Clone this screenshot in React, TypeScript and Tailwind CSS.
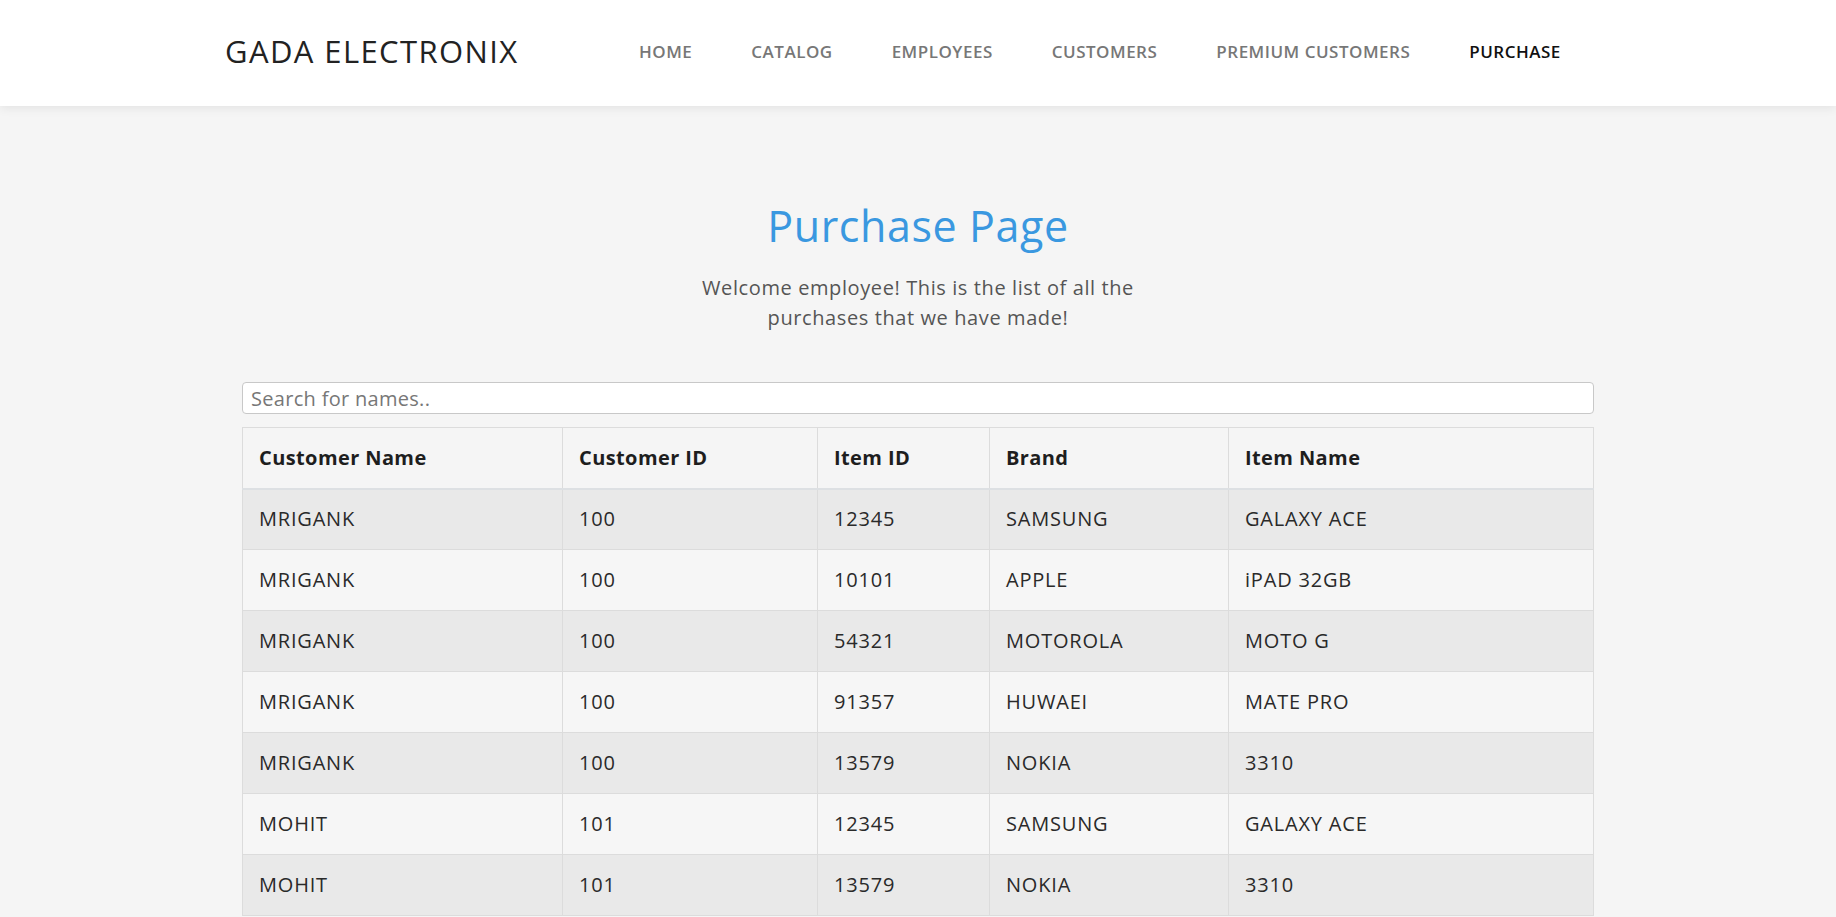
import React from 'react';

const navItems = ['HOME', 'CATALOG', 'EMPLOYEES', 'CUSTOMERS', 'PREMIUM CUSTOMERS', 'PURCHASE'];

const purchases = [
  { name: 'MRIGANK', customerId: '100', itemId: '12345', brand: 'SAMSUNG', item: 'GALAXY ACE' },
  { name: 'MRIGANK', customerId: '100', itemId: '10101', brand: 'APPLE', item: 'iPAD 32GB' },
  { name: 'MRIGANK', customerId: '100', itemId: '54321', brand: 'MOTOROLA', item: 'MOTO G' },
  { name: 'MRIGANK', customerId: '100', itemId: '91357', brand: 'HUWAEI', item: 'MATE PRO' },
  { name: 'MRIGANK', customerId: '100', itemId: '13579', brand: 'NOKIA', item: '3310' },
  { name: 'MOHIT', customerId: '101', itemId: '12345', brand: 'SAMSUNG', item: 'GALAXY ACE' },
  { name: 'MOHIT', customerId: '101', itemId: '13579', brand: 'NOKIA', item: '3310' },
];

const font = { fontFamily: '"Open Sans", "Liberation Sans", sans-serif' };

export default function App() {
  return (
    <div className="min-h-screen bg-[#f5f5f5] text-[#333]" style={font}>
      <header className="relative z-10 h-[106px] bg-white shadow-[0_2px_10px_rgba(0,0,0,0.08)]">
        <div className="flex h-full items-center pb-[3px] pl-[225px]">
          <div className="w-[414px] text-[31px] font-normal tracking-[1.4px] text-[#222]">GADA ELECTRONIX</div>
          <nav className="flex items-center gap-[59px]">
            {navItems.map((item) => (
              <a
                key={item}
                href="#"
                className={
                  item === 'PURCHASE'
                    ? 'text-[17px] font-semibold tracking-[0.5px] text-[#111]'
                    : 'text-[17px] font-semibold tracking-[0.5px] text-[#777]'
                }
              >
                {item}
              </a>
            ))}
          </nav>
        </div>
      </header>

      <main className="pt-[92px]">
        <div className="text-center">
          <h1 className="text-[43px] leading-[56px] font-normal tracking-[0.6px] text-[#3a98e0]">Purchase Page</h1>
          <p className="mt-[19px] text-[20px] leading-[30px] tracking-[0.6px] text-[#555]">
            Welcome employee! This is the list of all the
            <br />
            purchases that we have made!
          </p>
        </div>

        <div className="mx-auto mt-[49px] w-[1352px]">
          <input
            type="text"
            placeholder="Search for names.."
            className="block h-[32px] w-full rounded-[4px] border border-[#c8c8c8] bg-white px-[8px] text-[20px] tracking-[0.3px] text-[#333] placeholder:text-[#777] outline-none"
          />

          <table className="mt-[13px] w-full table-fixed border-collapse border border-[#dcdcdc] text-left">
            <colgroup>
              <col className="w-[320px]" />
              <col className="w-[255px]" />
              <col className="w-[172px]" />
              <col className="w-[239px]" />
              <col />
            </colgroup>
            <thead>
              <tr className="h-[61px] bg-[#f5f5f5]">
                {['Customer Name', 'Customer ID', 'Item ID', 'Brand', 'Item Name'].map((h) => (
                  <th
                    key={h}
                    className="border border-b-2 border-[#dcdcdc] border-b-[#dde0e3] px-[16px] text-[20px] font-bold tracking-[0.4px] text-[#1e1e1e]"
                  >
                    {h}
                  </th>
                ))}
              </tr>
            </thead>
            <tbody>
              {purchases.map((p, i) => (
                <tr key={i} className={i % 2 === 0 ? 'h-[61px] bg-[#e9e9e9]' : 'h-[61px] bg-[#f6f6f6]'}>
                  <td className="border border-[#dcdcdc] px-[16px] text-[20px] tracking-[0.8px] text-[#2a2a2a]">{p.name}</td>
                  <td className="border border-[#dcdcdc] px-[16px] text-[20px] tracking-[0.8px] text-[#2a2a2a]">{p.customerId}</td>
                  <td className="border border-[#dcdcdc] px-[16px] text-[20px] tracking-[0.8px] text-[#2a2a2a]">{p.itemId}</td>
                  <td className="border border-[#dcdcdc] px-[16px] text-[20px] tracking-[0.8px] text-[#2a2a2a]">{p.brand}</td>
                  <td className="border border-[#dcdcdc] px-[16px] text-[20px] tracking-[0.8px] text-[#2a2a2a]">{p.item}</td>
                </tr>
              ))}
            </tbody>
          </table>
        </div>
      </main>
    </div>
  );
}
